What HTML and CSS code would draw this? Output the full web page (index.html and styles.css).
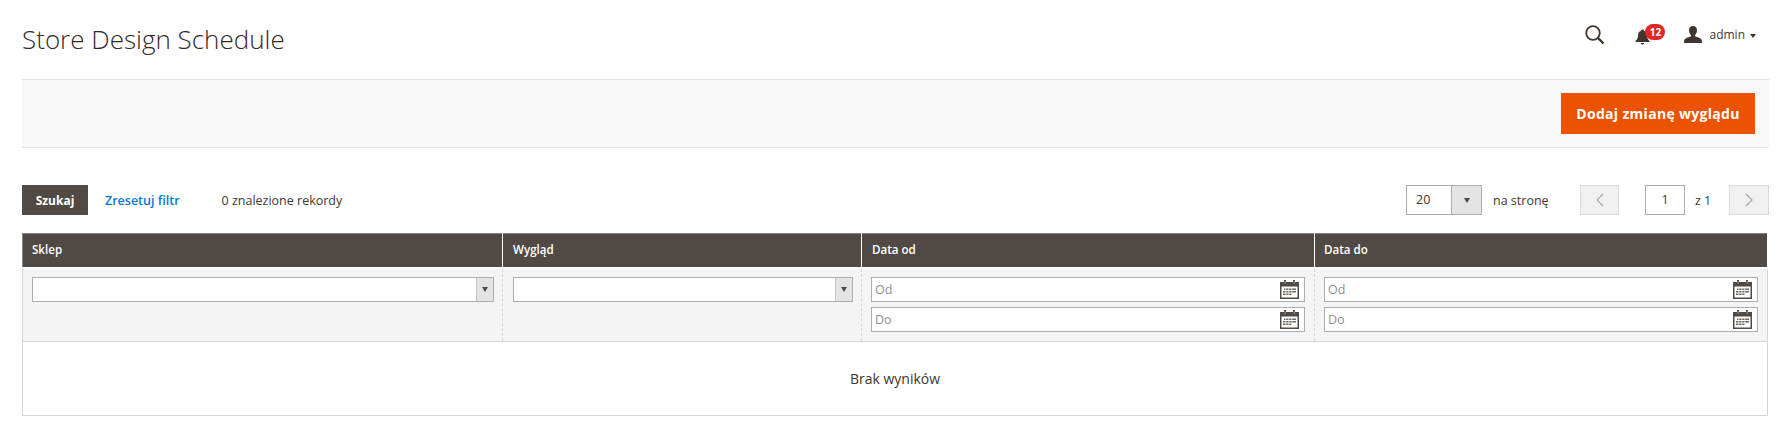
FILE: index.html
```html
<!DOCTYPE html>
<html lang="pl">
<head>
<meta charset="utf-8">
<title>Store Design Schedule</title>
<link rel="stylesheet" href="styles.css">
</head>
<body>
<header class="page-header">
  <h1 class="page-title">Store Design Schedule</h1>
  <div class="header-actions">
    <svg class="icon-search" width="20" height="20" viewBox="0 0 20 20"><circle cx="8" cy="8" r="6.8" fill="none" stroke="#41362f" stroke-width="1.800"/><path d="M13 13L18.500 18.500" stroke="#41362f" stroke-width="2.400" fill="none"/></svg>
    <div class="notif">
      <svg width="15" height="16" viewBox="0 0 15 16"><path d="M7.5 0.5c.9 0 1.4.6 1.5 1.3C11.200 2.400 12 4.200 12 6.500c0 2.800 1 4.200 2.500 5.500v1H.5v-1C2 10.700 3 9.300 3 6.500 3 4.200 3.800 2.400 6 1.800 6.100 1.100 6.600.5 7.500.5zM5.800 14h3.400c-.2 1-.9 1.700-1.700 1.700S6 15 5.800 14z" fill="#41362f"/></svg>
      <span class="badge">12</span>
    </div>
    <div class="user">
      <svg width="18" height="17" viewBox="0 0 18 17"><path d="M9 0c2.600 0 4 1.800 4 4.300 0 1.900-.8 3.700-1.900 4.700v1.300c1.900.8 5.400 1.700 6.400 3.200.3.500.5 1.700.5 3.500H0c0-1.800.2-3 .5-3.500 1-1.500 4.500-2.400 6.400-3.200V9C5.800 8 5 6.200 5 4.300 5 1.800 6.400 0 9 0z" fill="#41362f"/></svg>
      <span class="user-name">admin</span>
      <span class="caret"></span>
    </div>
  </div>
</header>

<section class="page-actions">
  <button class="primary-btn" type="button">Dodaj zmianę wyglądu</button>
</section>

<section class="grid-toolbar">
  <div class="toolbar-left">
    <button class="search-btn" type="button">Szukaj</button>
    <a class="reset-link" href="#">Zresetuj filtr</a>
    <span class="records">0 znalezione rekordy</span>
  </div>
  <div class="toolbar-right">
    <div class="per-page">
      <span class="per-value">20</span>
      <span class="per-toggle"><span class="caret-dark"></span></span>
    </div>
    <span class="per-label">na stronę</span>
    <button class="pager-btn prev" type="button" aria-label="Poprzednia"><svg width="10" height="14" viewBox="0 0 10 14"><path d="M8 1L2 7l6 6" fill="none" stroke="#a8a8a8" stroke-width="1.200"/></svg></button>
    <span class="page-box">1</span>
    <span class="page-total">z 1</span>
    <button class="pager-btn next" type="button" aria-label="Następna"><svg width="10" height="14" viewBox="0 0 10 14"><path d="M2 1l6 6-6 6" fill="none" stroke="#a8a8a8" stroke-width="1.200"/></svg></button>
  </div>
</section>

<table class="data-grid">
  <colgroup>
    <col class="col-store"><col class="col-design"><col class="col-from"><col class="col-to">
  </colgroup>
  <thead>
    <tr>
      <th>Sklep</th>
      <th>Wygląd</th>
      <th>Data od</th>
      <th>Data do</th>
    </tr>
  </thead>
  <tbody>
    <tr class="filters">
      <td><div class="select-box"><span class="select-toggle"><span class="caret-dark"></span></span></div></td>
      <td><div class="select-box"><span class="select-toggle"><span class="caret-dark"></span></span></div></td>
      <td>
        <div class="date-box"><span>Od</span><svg class="cal" width="19" height="19" viewBox="0 0 19 19"><use href="#cal"/></svg></div>
        <div class="date-box"><span>Do</span><svg class="cal" width="19" height="19" viewBox="0 0 19 19"><use href="#cal"/></svg></div>
      </td>
      <td>
        <div class="date-box"><span>Od</span><svg class="cal" width="19" height="19" viewBox="0 0 19 19"><use href="#cal"/></svg></div>
        <div class="date-box"><span>Do</span><svg class="cal" width="19" height="19" viewBox="0 0 19 19"><use href="#cal"/></svg></div>
      </td>
    </tr>
    <tr class="empty">
      <td colspan="4">Brak wyników</td>
    </tr>
  </tbody>
</table>

<svg class="sprite" width="0" height="0">
  <symbol id="cal" viewBox="0 0 19 19">
    <path d="M0 2h19v17H0z" fill="#514943"/>
    <path d="M1.500 6.500h16v11h-16z" fill="#fff"/>
    <path d="M4 0h2v5H4zM13 0h2v5h-2z" fill="#514943"/>
    <path d="M4.800 1h.6v3h-.6zM13.800 1h.6v3h-.6z" fill="#ccc"/>
    <path d="M4 8.500h12v1.400H4zM3 11h13v1.400H3zM3 13.500h9v1.400H3z" fill="#6f6760"/>
    <path d="M5.500 8v7.500h.7V8zM8.500 8v7.500h.7V8zM11.500 8v7.500h.7V8z" fill="#fff"/>
  </symbol>
</svg>
</body>
</html>
```
FILE: styles.css
```css
* { box-sizing: border-box; }
html, body { margin: 0; padding: 0; }
body {
  background: #fff;
  color: #41362f;
  font-family: "Open Sans", sans-serif;
  font-size: 12.500px;
  padding: 0 18px 0 22px;
  height: 446px;
  overflow: hidden;
}
.page-header {
  display: flex;
  justify-content: space-between;
  align-items: flex-start;
  height: 79px;
}
.page-title {
  margin: 21px 0 0;
  font-size: 26px;
  line-height: 36px;
  font-weight: 300;
  color: #35291f;
}
.header-actions {
  display: flex;
  align-items: center;
  margin-top: 24px;
  padding-right: 13px;
}
.icon-search { margin-right: 30px; margin-top: 1px; }
.notif {
  position: relative;
  width: 15px;
  height: 16px;
  margin-right: 34px;
  margin-top: 4px;
}
.notif svg { display: block; }
.badge {
  position: absolute;
  left: 10px;
  top: -5px;
  min-width: 20px;
  height: 16px;
  padding: 0 3px;
  border-radius: 8px;
  background: #e22626;
  color: #fff;
  font-size: 10px;
  font-weight: 700;
  line-height: 16px;
  text-align: center;
}
.user { display: flex; align-items: center; }
.user svg { margin-right: 7px; }
.user-name { font-size: 12px; color: #41362f; }
.caret {
  width: 0;
  height: 0;
  margin-left: 5px;
  margin-top: 2px;
  border-left: 3.500px solid transparent;
  border-right: 3.500px solid transparent;
  border-top: 4px solid #41362f;
}
.page-actions {
  display: flex;
  justify-content: flex-end;
  align-items: center;
  height: 69px;
  padding-right: 14px;
  background: #f8f8f8;
  border-top: 1px solid #e3e3e3;
  border-bottom: 1px solid #e3e3e3;
}
.primary-btn {
  width: 194px;
  height: 41px;
  border: 0;
  background: #eb5202;
  color: #fff;
  font-family: inherit;
  font-size: 14px;
  font-weight: 700;
  letter-spacing: 0.3px;
  padding: 0;
}
.grid-toolbar {
  display: flex;
  justify-content: space-between;
  align-items: center;
  height: 30px;
  margin-top: 37px;
}
.toolbar-left, .toolbar-right { display: flex; align-items: center; }
.search-btn {
  width: 66px;
  height: 30px;
  border: 0;
  padding: 0;
  background: #514943;
  color: #fff;
  font-family: inherit;
  font-size: 12px;
  font-weight: 700;
}
.reset-link {
  margin-left: 17px;
  color: #007bdb;
  text-decoration: none;
  font-weight: 600;
  font-size: 12.500px;
}
.records { margin-left: 42px; }
.per-page {
  display: flex;
  width: 76px;
  height: 30px;
  border: 1px solid #adadad;
  background: #fff;
}
.per-value { flex: 1; line-height: 28px; padding-left: 9px; }
.per-toggle {
  display: flex;
  align-items: center;
  justify-content: center;
  width: 30px;
  background: #e3e3e3;
  border-left: 1px solid #adadad;
}
.caret-dark {
  width: 0;
  height: 0;
  border-left: 3.500px solid transparent;
  border-right: 3.500px solid transparent;
  border-top: 5px solid #514943;
}
.per-label { margin-left: 11px; width: 56px; }
.pager-btn {
  display: flex;
  align-items: center;
  justify-content: center;
  width: 39px;
  height: 30px;
  padding: 0;
  background: #f0f0f0;
  border: 1px solid #d9d9d9;
}
.prev { margin-left: 31px; }
.page-box {
  width: 40px;
  height: 30px;
  margin-left: 26px;
  border: 1px solid #adadad;
  text-align: center;
  line-height: 28px;
}
.page-total { margin-left: 10px; width: 19px; }
.next { margin-left: 15px; width: 40px; }
.data-grid {
  width: calc(100% - 1px);
  margin-top: 18px;
  table-layout: fixed;
  border-collapse: collapse;
}
.col-store { width: 480px; }
.col-design { width: 359px; }
.col-from { width: 453px; }
.data-grid th {
  height: 34px;
  padding: 0 9px 2px;
  background: #514943;
  color: #fff;
  font-size: 11.600px;
  font-weight: 600;
  text-align: left;
  border: 1px solid #8a837f;
  border-left-color: #fff;
  border-right-color: #fff;
  border-bottom: 2px solid #fff;
}
.data-grid th:first-child { border-left-color: #8a837f; }
.data-grid th:nth-child(2), .data-grid th:nth-child(3) { padding-left: 10px; }
.filters td {
  height: 74px;
  padding: 8px 9px 0;
  vertical-align: top;
  background: #f4f4f4;
  border-top: 1px solid #8a837f;
  border-left: 1px dashed #d6d6d6;
  border-right: 1px dashed #d6d6d6;
  border-bottom: 1px solid #d6d6d6;
}
.filters td:first-child { border-left: 1px solid #d6d6d6; padding-right: 8px; }
.filters td:nth-child(2) { padding-left: 10px; padding-right: 8px; }
.filters td:last-child { border-right: 1px solid #d6d6d6; }
.select-box {
  display: flex;
  justify-content: flex-end;
  height: 25px;
  background: #fff;
  border: 1px solid #adadad;
}
.select-toggle {
  display: flex;
  align-items: center;
  justify-content: center;
  width: 17px;
  background: #e3e3e3;
  border-left: 1px solid #c6c6c6;
}
.date-box {
  display: flex;
  justify-content: space-between;
  align-items: center;
  height: 25px;
  padding: 0 5px 0 3px;
  background: #fff;
  border: 1px solid #adadad;
  color: #8f8f8f;
  font-size: 12.500px;
}
.date-box + .date-box { margin-top: 5px; }
.cal { display: block; }
.sprite { position: absolute; }
.empty td {
  height: 74px;
  text-align: center;
  font-size: 14px;
  background: #fff;
  border: 1px solid #d6d6d6;
}
```
